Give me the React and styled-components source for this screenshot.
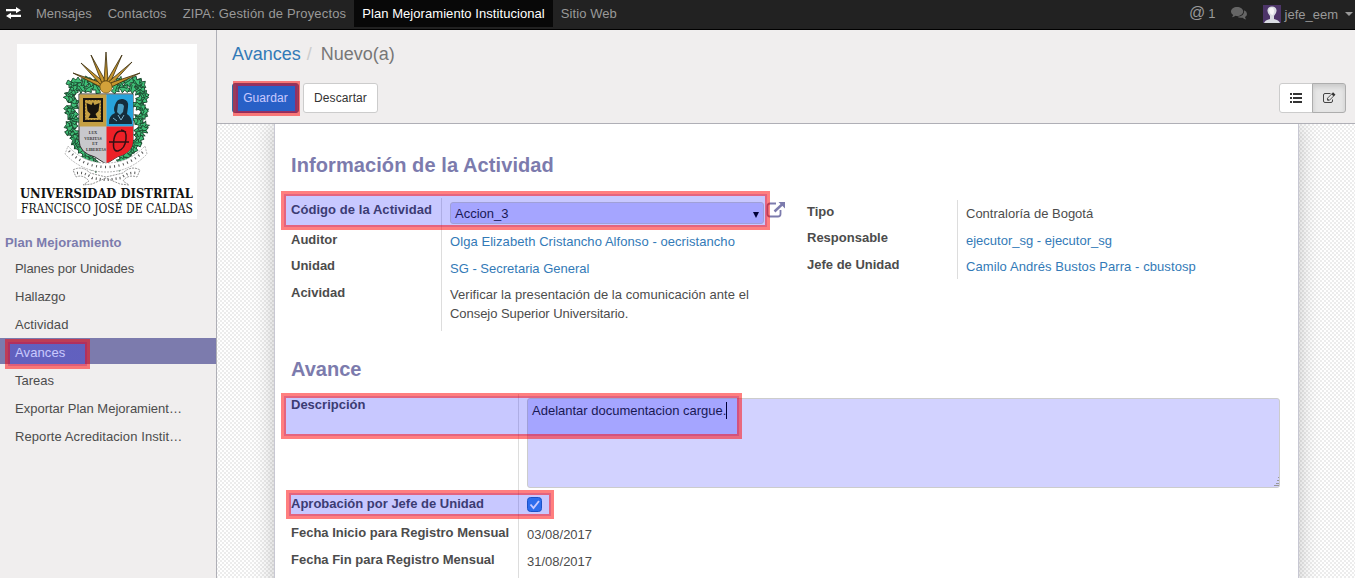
import React from "react";
import styled, { createGlobalStyle } from "styled-components";

const Global = createGlobalStyle`
  *{box-sizing:border-box}
  html,body,#root{height:100%}
  body{margin:0;overflow:hidden;font-family:"Liberation Sans",Arial,sans-serif;font-size:13px;color:#4c4c4c}
`;

const Page = styled.div`position:relative;display:flex;flex-direction:column;height:578px;width:1355px;overflow:hidden;`;
const TopBar = styled.nav`display:flex;flex:none;height:30px;background:#222;border-bottom:1px solid #000;color:#999;`;
const SwapIcon = styled.svg`width:15px;height:12px;margin:7px 7px 0 6px;`;
const NavItem = styled.a`
  height:27px;padding:0 8px;line-height:28px;white-space:nowrap;letter-spacing:${p => p.$ls || 0}px;
  color:${p => (p.$active ? "#fff" : "#999")};background:${p => (p.$active ? "#080808" : "transparent")};
`;
const Systray = styled.div`display:flex;margin-left:auto;line-height:28px;padding-right:2px;white-space:nowrap;`;
const Mention = styled.span`font-size:16px;line-height:25px;margin-right:3px;`;
const MentionCount = styled.span`font-size:13px;margin-right:15px;`;
const ChatIcon = styled.svg`width:16px;height:13px;margin:7px 16px 0 0;`;
const Avatar = styled.svg`width:18px;height:18px;margin:5px 4px 0 0;`;
const UserName = styled.span`letter-spacing:${p => p.$ls || 0}px;line-height:30px;`;
const Caret = styled.i`width:0;height:0;margin:12px 0 0 7px;border:4px solid transparent;border-top-color:#999;border-bottom:0;`;

const Body = styled.div`display:flex;flex:1;min-height:0;`;
const Sidebar = styled.aside`width:217px;flex:none;background:#f0eeee;border-right:1px solid #afafb6;`;
const Logo = styled.svg`display:block;width:180px;height:175px;margin:14px 0 0 17px;background:#fff;overflow:visible;`;
const MenuTitle = styled.div`margin-top:13px;padding-left:5px;height:22px;line-height:22px;font-weight:bold;color:#7c7bad;letter-spacing:${p => p.$ls || 0}px;`;
const MenuItem = styled.a`
  display:block;height:26px;margin-bottom:2px;padding-left:15px;line-height:29px;white-space:nowrap;
  letter-spacing:${p => p.$ls || 0}px;
  color:${p => (p.$active ? "#fff" : "#4c4c4c")};background:${p => (p.$active ? "#7c7bad" : "transparent")};
`;

const Content = styled.main`display:flex;flex-direction:column;flex:1;min-width:0;`;
const ControlPanel = styled.header`height:94px;flex:none;padding:0 9px 0 15px;background:#f0eeee;border-bottom:1px solid #afafb6;`;
const Breadcrumb = styled.div`display:flex;height:53px;line-height:48px;font-size:18px;color:#777;`;
const CrumbLink = styled.a`color:#337ab7;`;
const Slash = styled.span`color:#ccc;margin:0 9px 0 6px;`;
const Actions = styled.div`display:flex;gap:4px;height:30px;`;
const Button = styled.button`
  font:12px "Liberation Sans",Arial,sans-serif;width:${p => p.$w}px;height:30px;padding:0;border-radius:3px;
  letter-spacing:${p => p.$ls || 0}px;
  color:${p => (p.$primary ? "#fff" : "#333")};background:${p => (p.$primary ? "#337ab7" : "#fff")};
  border:1px solid ${p => (p.$primary ? "#2e6da4" : "#ccc")};
`;
const Switcher = styled.div`display:flex;margin-left:auto;`;
const ViewButton = styled.button`
  display:flex;align-items:center;justify-content:center;height:30px;width:34px;padding:0;
  background:${p => (p.$active ? "#e6e6e6" : "#fff")};border:1px solid ${p => (p.$active ? "#adadad" : "#ccc")};
  box-shadow:${p => (p.$active ? "inset 0 3px 5px rgba(0,0,0,.125)" : "none")};
  border-radius:${p => (p.$active ? "0 3px 3px 0" : "3px 0 0 3px")};
  & + &{margin-left:-1px}
  svg{width:14px;height:14px}
`;
const Canvas = styled.div`
  flex:1;min-height:0;overflow:hidden;padding-left:57px;
  background:repeating-conic-gradient(#ececec 0 25%,#fff 0 50%) 1px 0/4px 4px;
`;
const Sheet = styled.section`
  width:1025px;height:470px;padding:26px 18px 0 16px;background:#fff;border:solid #c8c8d3;border-width:0 1px;
  box-shadow:0 0 20px rgba(0,0,0,.22);
`;
const Heading = styled.h2`margin:0;height:${p => p.$h}px;line-height:30px;font-size:20px;font-weight:bold;color:#7c7bad;letter-spacing:${p => p.$ls || 0}px;`;
const Columns = styled.div`display:flex;align-items:flex-start;height:${p => p.$h}px;`;
const Group = styled.div`flex:none;width:${p => p.$w}px;margin-top:${p => p.$top || 0}px;`;
const Row = styled.div`display:flex;height:${p => p.$h}px;`;
const Label = styled.label`
  width:${p => p.$w || 151}px;flex:none;border-right:1px solid #ddd;padding-top:${p => p.$pt || 0}px;
  line-height:20px;font-weight:bold;white-space:nowrap;letter-spacing:${p => p.$ls || 0}px;
`;
const Value = styled.div`
  display:flex;flex-wrap:wrap;align-content:flex-start;padding:${p => (p.$pt ?? 2)}px 0 0 8px;line-height:19px;
  letter-spacing:${p => p.$ls || 0}px;color:${p => (p.$link ? "#337ab7" : "#4c4c4c")};
`;
const Line = styled.span`flex:none;width:100%;white-space:nowrap;letter-spacing:${p => p.$ls || 0}px;`;
const Select = styled.div`
  display:flex;justify-content:space-between;width:314px;height:22px;padding:0 4px;line-height:22px;
  background:#d2d2ff;border:1px solid #ccc;border-radius:3px;color:#1f1f1f;
`;
const Arrow = styled.i`width:0;height:0;margin:9px 0 0;border:3px solid transparent;border-top:6px solid #000;border-bottom:0;`;
const OpenIcon = styled.svg`width:20px;height:18px;margin:-1px 0 0 2px;`;
const TextArea = styled.div`
  position:relative;display:flex;width:753px;height:90px;padding:3px 4px;background:#d2d2ff;
  border:1px solid #ccc;border-radius:3px;color:#1f1f1f;line-height:18px;
`;
const Cursor = styled.i`width:1px;height:17px;background:#000;`;
const Grip = styled.svg`position:absolute;right:0;bottom:1px;width:5px;height:9px;`;
const Check = styled.svg`width:15px;height:15px;margin-top:-1px;`;
const Highlight = styled.div`
  position:absolute;left:${p => p.$x}px;top:${p => p.$y}px;width:${p => p.$w}px;height:${p => p.$h}px;
  border:5px solid rgba(255,0,0,.5);pointer-events:none;
  background:linear-gradient(rgba(0,0,255,.216),rgba(0,0,255,.216)) border-box center/calc(100% - 6px) calc(100% - 6px) no-repeat;
`;

const rayTips = [[56, 29], [64, 19], [74, 11], [89, 8], [105, 11], [115, 18], [123, 29]];
const rays = rayTips.map(([x, y]) => {
  const dx = x - 89, dy = y - 43, len = Math.hypot(dx, dy);
  const ux = dx / len, uy = dy / len;
  const bx = 89 + ux * 6, by = 43 + uy * 6;
  return `M${bx - uy * 2} ${by + ux * 2}L${x} ${y}L${bx + uy * 2} ${by - ux * 2}Z`;
});
const leaves = [];
for (let i = 0; i < 26; i++) {
  const y = 40 + i * 3.3;
  const drift = i < 17 ? Math.sin(i * 1.3) * 3 : (i - 16) * 2.6;
  leaves.push([55 + drift, y, i], [124 - drift, y, i + 1]);
}
for (let i = 0; i < 6; i++) leaves.push([60 + i * 4, 38 + (i % 2) * 6, i], [119 - i * 4, 38 + (i % 2) * 6, i + 1]);

const Crest = () => (
  <Logo viewBox="0 0 180 175">
    {leaves.map(([x, y, n], i) => (
      <g key={i} transform={`translate(${x} ${y}) rotate(${n * 47})`}>
        <path d="M-6 0L-4-4-1-2 1-5 3-2 6-1 3 1 4 4 0 2-3 4-3 1Z" fill="#3fbf77" stroke="#1d4a30" strokeWidth=".9" />
        <path d="M-3 0L3 1" stroke="#0d2f1b" strokeWidth=".7" />
      </g>
    ))}
    {rays.map(d => <path key={d} d={d} fill="#c5952e" stroke="#382b0b" strokeWidth=".8" />)}
    <path d="M62 50h54v46q0 13-16 17l-11 7-11-7Q62 109 62 96Z" fill="#c8c8cc" stroke="#333" />
    <path d="M62.500 50.500h27v32h-27z" fill="#c5a044" />
    <path d="M89.500 50.500h26.500v32H89.500z" fill="#27a3dc" />
    <path d="M89.500 82.500h26.500v14q0 12-15 16l-11.500 7z" fill="#ed2027" />
    <circle cx="89" cy="43" r="6" fill="#d3a23a" stroke="#77530f" strokeWidth=".7" />
    <path d="M66 54h20v24H66z" fill="#191511" />
    <path d="M68.500 56.500h15v19h-15z" fill="#c5a044" stroke="#d1a53c" strokeWidth="1" strokeDasharray="2 1" />
    <path d="M76 58l1.500 3 5-2-1 8-3 3 2 4h-9l2-4-3-3-1-8 5 2z" fill="#17130e" />
    <path d="M92 80q-1-8 6-11-2-4 0-8 2-7 8-6 6 1 5 8l-1 7q5 3 5 10z" fill="#152d3c" />
    <path d="M101 60q5-1 6 2l-1 6-3 3-3-3z" fill="#4c9fc4" />
    <path d="M101 71l3 5 3-5M96 74l4 3" fill="none" stroke="#7eb3ce" />
    <g fontFamily="Liberation Serif,serif" fontWeight="bold" fontSize="4" fill="#333" textAnchor="middle">
      <text x="76" y="90">LUX</text><text x="76" y="95.500">VERITAS</text><text x="78" y="101">ET</text><text x="79" y="106.500">LIBERTAS</text>
    </g>
    <path d="M109 88q-10-4-12 7-2 13 4 12 7-2 8-12 1-9-5-9M92 98h20" fill="none" stroke="#331014" strokeWidth="1.500" />
    <path d="M51 102q15 17 38 17t39-17l2 8q-17 18-41 18T48 110z" fill="#fff" stroke="#999" strokeWidth=".7" strokeDasharray="2 1" />
    <path d="M52 107q15 16 37 16t38-16" fill="none" stroke="#555" strokeWidth="2.500" strokeDasharray="1 3.500" />
    <path d="M56 126q9-5 17 3l16 4 17-4q8-8 17-3l-3 7q-9-3-14 4l6 4-9-1-14-6-14 6-9 1 6-4q-6-7-13-4z" fill="#fff" stroke="#888" strokeWidth=".9" strokeDasharray="2 1" />
    <path d="M60 129q8-1 15 5l14 2 15-2q7-6 15-5" fill="none" stroke="#555" strokeWidth="2.500" strokeDasharray="1 3" />
    <g fontFamily="'DejaVu Serif Condensed','DejaVu Serif',serif" fontStretch="condensed" fill="#111" fontSize="13">
      <text x="3" y="154" fontWeight="bold" fontSize="12.500" textLength="173" lengthAdjust="spacingAndGlyphs">UNIVERSIDAD DISTRITAL</text>
      <text x="4" y="169" fontSize="12.500" textLength="172" lengthAdjust="spacingAndGlyphs">FRANCISCO JOSÉ DE CALDAS</text>
    </g>
  </Logo>
);

const menu = [
  ["Planes por Unidades", -0.08], ["Hallazgo"], ["Actividad", 0.08], ["Avances", 0.1], ["Tareas"],
  ["Exportar Plan Mejoramient…"], ["Reporte Acreditacion Instit…", 0.09],
];

export default function App() {
  return (
    <Page>
      <Global />
      <TopBar>
        <SwapIcon viewBox="0 0 15 12" fill="#fff"><path d="M0 2h10V0l5 3.200L10 6.200v-2H0zM15 7.800H5v-2L0 9l5 3v-2h10z" /></SwapIcon>
        <NavItem>Mensajes</NavItem>
        <NavItem $ls={0.05}>Contactos</NavItem>
        <NavItem $ls={0.16}>ZIPA: Gestión de Proyectos</NavItem>
        <NavItem $ls={0.06} $active>Plan Mejoramiento Institucional</NavItem>
        <NavItem $ls={0.08}>Sitio Web</NavItem>
        <Systray>
          <Mention>@</Mention><MentionCount>1</MentionCount>
          <ChatIcon viewBox="0 0 16 13" fill="#666">
            <path d="M6 0C2.700 0 0 2 0 4.500 0 6 .9 7.100 2.200 7.900L1 10.300Q3 10 4.500 8.800q.8.200 1.500.200c3.400 0 6.200-2 6.200-4.500S9.400 0 6 0z" />
            <path d="M13.200 3.300Q16 4.500 16 7q0 1.800-2 3 .2 1.400 1.200 2.500-2-.1-3.600-1.800-3.200.5-5.400-1Q13.500 9.500 13.200 3.300z" />
          </ChatIcon>
          <Avatar viewBox="0 0 18 18">
            <path d="M0 0h18v18H0z" fill="#4d3569" />
            <path d="M1 18q1-3 6-4v-3Q4 8 4.500 5 5 1.500 9 1.500t4.500 3.500q.5 3-2.500 6v3q5 1 6 4z" fill="#d9dce2" />
            <path d="M6 5q1-3 4-2 2 2 0 7-3 0-4-5z" fill="#f6f6f8" />
          </Avatar>
          <UserName>jefe_eem</UserName><Caret />
        </Systray>
      </TopBar>
      <Body>
        <Sidebar>
          <Crest />
          <MenuTitle $ls={0.06}>Plan Mejoramiento</MenuTitle>
          {menu.map(([m, ls]) => <MenuItem key={m} $ls={ls} $active={m === "Avances"}>{m}</MenuItem>)}
        </Sidebar>
        <Content>
          <ControlPanel>
            <Breadcrumb><CrumbLink>Avances</CrumbLink><Slash>/</Slash><span>Nuevo(a)</span></Breadcrumb>
            <Actions>
              <Button $primary $w={67} $ls={0.1}>Guardar</Button>
              <Button $w={75} $ls={0.1}>Descartar</Button>
              <Switcher>
                <ViewButton>
                  <svg viewBox="0 0 14 14" fill="#333"><path d="M1 2h2v2H1zM4 2h9v2H4zM1 6h2v2H1zM4 6h9v2H4zM1 10h2v2H1zM4 10h9v2H4z" /></svg>
                </ViewButton>
                <ViewButton $active>
                  <svg viewBox="0 0 14 14" fill="none" stroke="#444"><path d="M8.500 2.500H3Q1.500 2.500 1.500 4v6q0 1.500 1.500 1.500h6q1.500 0 1.500-1.500V8.500" /><path d="M5.500 9.200V7.200l5.400-5.400 2 2-5.400 5.400z" strokeWidth=".9" /><path d="M9.500 3.200l2 2 1.700-1.600-2-2zM5.500 7.400v1.800h1.800z" fill="#333" stroke="none" /></svg>
                </ViewButton>
              </Switcher>
            </Actions>
          </ControlPanel>
          <Canvas>
            <Sheet>
              <Heading $h={48} $ls={0.09}>Información de la Actividad</Heading>
              <Columns $h={156}>
                <Group $w={516}>
                  <Row $h={32}>
                    <Label $pt={2} $ls={0.06}>Código de la Actividad</Label>
                    <Value $pt={4}><Select>Accion_3<Arrow /></Select>
                      <OpenIcon viewBox="0 0 20 18" fill="none" stroke="#7c7bad" strokeWidth="1.800"><path d="M10 2.500H4Q1.500 2.500 1.500 5v8q0 2.500 2.500 2.500h8q2.500 0 2.500-2.500V9" /><path d="M8.500 10.500L16.500 3" strokeWidth="2.400" /><path d="M12.500 1H19v6.500z" fill="#7c7bad" stroke="none" /></OpenIcon>
                    </Value>
                  </Row>
                  <Row $h={26}><Label>Auditor</Label><Value $link $ls={0.065}>Olga Elizabeth Cristancho Alfonso - oecristancho</Value></Row>
                  <Row $h={27}><Label>Unidad</Label><Value $pt={3} $link>SG - Secretaria General</Value></Row>
                  <Row $h={48}><Label>Acividad</Label><Value><Line $ls={0.05}>Verificar la presentación de la comunicación ante el</Line><Line $ls={-0.05}>Consejo Superior Universitario.</Line></Value></Row>
                </Group>
                <Group $w={474} $top={2}>
                  <Row $h={27}><Label $pt={2}>Tipo</Label><Value $pt={4}>Contraloría de Bogotá</Value></Row>
                  <Row $h={26}><Label $pt={1}>Responsable</Label><Value $link $pt={4}>ejecutor_sg - ejecutor_sg</Value></Row>
                  <Row $h={26}><Label $pt={2}>Jefe de Unidad</Label><Value $pt={4} $link $ls={0.08}>Camilo Andrés Bustos Parra - cbustosp</Value></Row>
                </Group>
              </Columns>
              <Heading $h={40}>Avance</Heading>
              <Row $h={100}><Label $w={228} $pt={1}>Descripción</Label><Value $pt={4}><TextArea>Adelantar documentacion cargue.<Cursor />
                <Grip viewBox="0 0 5 9" stroke="#999"><path d="M4 .5h1M3 3.500h2M2 6.500h3M0 8.500h5" /></Grip></TextArea></Value></Row>
              <Row $h={29}><Label $w={228}>Aprobación por Jefe de Unidad</Label><Value $pt={4}>
                <Check viewBox="0 0 15 15"><rect x=".5" y=".5" width="14" height="14" rx="3" fill="#3a8be8" stroke="#2468b8" /><path d="M3.500 7.500l3 3.500 5.500-7" fill="none" stroke="#fff" strokeWidth="1.900" /></Check></Value></Row>
              <Row $h={27}><Label $w={228}>Fecha Inicio para Registro Mensual</Label><Value>03/08/2017</Value></Row>
              <Row $h={30}><Label $w={228}>Fecha Fin para Registro Mensual</Label><Value>31/08/2017</Value></Row>
            </Sheet>
          </Canvas>
        </Content>
      </Body>
      <Highlight $x={5} $y={339} $w={85} $h={30} />
      <Highlight $x={233} $y={81} $w={67} $h={35} />
      <Highlight $x={281} $y={191} $w={489} $h={39} />
      <Highlight $x={281} $y={393} $w={461} $h={46} />
      <Highlight $x={286} $y={490} $w={268} $h={29} />
    </Page>
  );
}
